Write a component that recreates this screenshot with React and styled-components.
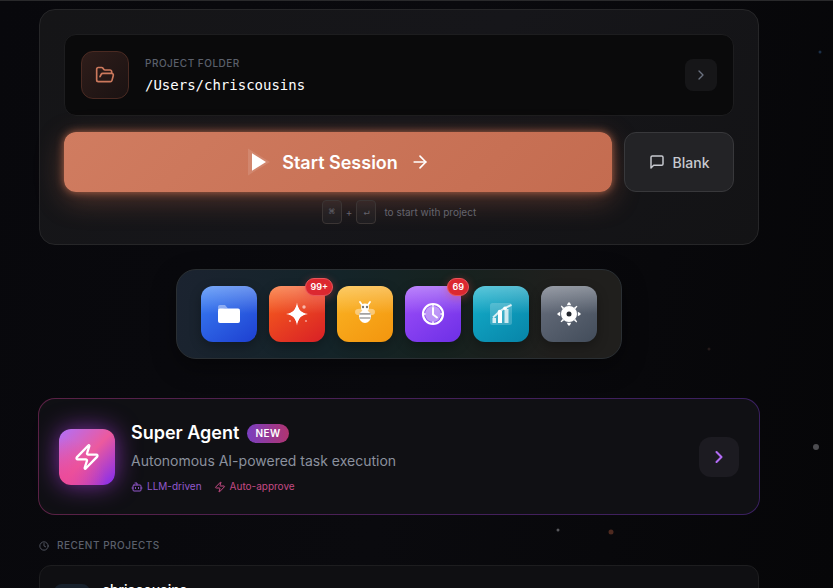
import React from 'react';
import styled, { createGlobalStyle, css } from 'styled-components';
import { ArrowRight, Bot, ChevronRight, Clock, FolderOpen, Zap } from 'lucide-react';

const stars = [
    { x: 820, y: 51, size: 3, color: '#1c3048' },
    { x: 709, y: 348, size: 3, color: '#241a1a' },
    { x: 816, y: 446, size: 6, color: '#4c4c50' },
    { x: 558, y: 529, size: 3, color: '#58585c' },
    { x: 611, y: 531, size: 5, color: '#4e2a20' },
];

const dockItems = [
    { id: 'files', label: 'Files', from: '#3b82f6', to: '#1d3fd0', Icon: FilesIcon },
    { id: 'skills', label: 'Skills', from: '#f9631c', to: '#d81f26', Icon: SparkIcon, badge: '99+' },
    { id: 'hive', label: 'Hive', from: '#fbb524', to: '#f3950e', Icon: BeeIcon },
    { id: 'history', label: 'History', from: '#a050fa', to: '#6d2fe6', Icon: TimeIcon, badge: '69' },
    { id: 'usage', label: 'Usage', from: '#14b0cc', to: '#0784a8', Icon: ChartIcon },
    { id: 'settings', label: 'Settings', from: '#6b7280', to: '#424c5a', Icon: GearIcon },
];

export default function App() {
    return (
        <Shell>
            <GlobalStyle/>
            {stars.map((star) => (
                <Star
                    key={star.x}
                    $size={star.size}
                    $color={star.color}
                    style={{ left: star.x, top: star.y }}
                />
            ))}
            <Column>
                <Launcher/>
                <Dock>
                    {dockItems.map(({ id, label, from, to, Icon, badge }) => (
                        <DockButton key={id} type="button" aria-label={label} $from={from} $to={to}>
                            <Icon/>
                            {badge && <Badge>{badge}</Badge>}
                        </DockButton>
                    ))}
                </Dock>
                <SuperAgent/>
                <RecentProjects/>
            </Column>
        </Shell>
    );
}

function Launcher() {
    return (
        <LauncherCard>
            <FolderButton type="button">
                <FolderTile>
                    <FolderOpen size={20}/>
                </FolderTile>
                <FolderText>
                    <Caption>Project Folder</Caption>
                    <Path>/Users/chriscousins</Path>
                </FolderText>
                <ArrowTile $size={32} $radius={8}>
                    <ChevronRight size={16}/>
                </ArrowTile>
            </FolderButton>
            <Actions>
                <StartButton type="button">
                    <svg width="24" height="28" viewBox="0 0 24 28" aria-hidden="true">
                        <path d="M2 0.5L24 14L2 27.5Z" fill="#fff" opacity="0.12"/>
                        <path d="M6 5.2L20 14L6 22.8Z" fill="#fff"/>
                    </svg>
                    Start Session
                    <ArrowRight size={20}/>
                </StartButton>
                <BlankButton type="button">
                    <svg width="16" height="16" viewBox="0 0 24 24" fill="none" stroke="currentColor" strokeWidth="2.2" strokeLinecap="round" strokeLinejoin="round" aria-hidden="true">
                        <path d="M21 15a2 2 0 0 1-2 2H7l-4 4V5a2 2 0 0 1 2-2h14a2 2 0 0 1 2 2z"/>
                    </svg>
                    Blank
                </BlankButton>
            </Actions>
            <Hint>
                <Keys>
                    <Key>⌘</Key>
                    <span>+</span>
                    <Key>↵</Key>
                </Keys>
                <span>to start with project</span>
            </Hint>
        </LauncherCard>
    );
}

function SuperAgent() {
    return (
        <AgentCard type="button">
            <AgentTile>
                <Zap size={28}/>
            </AgentTile>
            <AgentText>
                <AgentTitle>
                    Super Agent
                    <NewPill>NEW</NewPill>
                </AgentTitle>
                <AgentInfo>Autonomous AI-powered task execution</AgentInfo>
                <Tags>
                    <Tag $color="#9359cc"><Bot size={12}/>LLM-driven</Tag>
                    <Tag $color="#c44a84"><Zap size={12}/>Auto-approve</Tag>
                </Tags>
            </AgentText>
            <ArrowTile $size={40} $radius={12} $accent>
                <ChevronRight size={20} strokeWidth={2.5}/>
            </ArrowTile>
        </AgentCard>
    );
}

function RecentProjects() {
    return (
        <Recent>
            <RecentHeading>
                <Clock size={10}/>
                Recent Projects
            </RecentHeading>
            <ProjectRow href="#">
                <ProjectTile/>
                <ProjectName>chriscousins</ProjectName>
            </ProjectRow>
        </Recent>
    );
}

function FilesIcon() {
    return (
        <DockSvg viewBox="0 0 28 28">
            <path d="M3 10V7a2 2 0 0 1 2-2h5l3 3.5h-3z" opacity="0.4"/>
            <rect x="3" y="8.5" width="22" height="14.5" rx="2"/>
        </DockSvg>
    );
}

function SparkIcon() {
    return (
        <DockSvg viewBox="0 0 28 28">
            <path d="M14 2.5C14.9 9.5 18 13 25 14C18 15 14.9 18.5 14 25.5C13.1 18.5 10 15 3 14C10 13 13.1 9.5 14 2.5Z"/>
            <path d="M14 5L17 11L22 14L17 17L14 23L11 17L6 14L11 11Z"/>
            <circle cx="21" cy="7" r="1.7" opacity="0.6"/>
            <circle cx="7" cy="21" r="1.1" opacity="0.5"/>
            <circle cx="23" cy="21" r="1.1" opacity="0.5"/>
        </DockSvg>
    );
}

function BeeIcon() {
    return (
        <DockSvg viewBox="0 0 28 28">
            <ellipse cx="8.5" cy="12" rx="4.5" ry="3.2" opacity="0.4"/>
            <ellipse cx="19.5" cy="12" rx="4.5" ry="3.2" opacity="0.4"/>
            <path d="M11.5 5.5L9 2M16.5 5.5L19 2" stroke="#fff" strokeWidth="1.8" strokeLinecap="round"/>
            <ellipse cx="14" cy="7.5" rx="4" ry="4"/>
            <ellipse cx="14" cy="16.5" rx="6" ry="6.5"/>
            <path d="M8.5 13.8H19.5M8.5 18H19.5" stroke="#a3a3a3" strokeWidth="1.7"/>
            <circle cx="12" cy="7" r="1.2" fill="#767676"/>
            <circle cx="16" cy="7" r="1.2" fill="#767676"/>
        </DockSvg>
    );
}

function TimeIcon() {
    return (
        <DockSvg viewBox="0 0 28 28">
            <circle cx="14" cy="14" r="8" opacity="0.45"/>
            <circle cx="14" cy="14" r="10" fill="none" stroke="#fff" strokeWidth="2.2"/>
            <path d="M14 4V6.5M14 21.5V24M4 14H6.5M21.5 14H24" stroke="#fff" strokeWidth="1.5"/>
            <path d="M14 8V14.5L18 17.5" fill="none" stroke="#fff" strokeWidth="2" strokeLinecap="round" strokeLinejoin="round"/>
        </DockSvg>
    );
}

function ChartIcon() {
    return (
        <DockSvg viewBox="0 0 28 28">
            <rect x="3" y="3" width="22" height="22" rx="2.5" opacity="0.2"/>
            <rect x="5.5" y="18" width="3.5" height="5" opacity="0.8"/>
            <rect x="11" y="11" width="4" height="12"/>
            <rect x="17.5" y="9" width="4" height="14" opacity="0.75"/>
            <path d="M6 17.5L12.500 11.500L17 8.500L24.500 4.800" fill="none" stroke="#fff" strokeWidth="2" opacity="0.8"/>
            <circle cx="12.500" cy="11.300" r="1.600"/>
            <circle cx="18" cy="8.300" r="1.800"/>
        </DockSvg>
    );
}

function GearIcon() {
    return (
        <DockSvg viewBox="0 0 28 28">
            {[0, 90, 180, 270].map((angle) => (
                <path key={angle} d="M11.8 5.2L13.2 2.5H14.8L16.2 5.2Z" transform={`rotate(${angle} 14 14)`}/>
            ))}
            {[45, 135, 225, 315].map((angle) => (
                <path key={angle} d="M13 6L13.7 2.8H14.7L15 6Z" transform={`rotate(${angle} 14 14)`}/>
            ))}
            <circle cx="14" cy="14" r="8"/>
            <circle cx="14" cy="14" r="2.5" fill="#23272e"/>
        </DockSvg>
    );
}

const GlobalStyle = createGlobalStyle`
    * {
        box-sizing: border-box;
    }
    body {
        margin: 0;
        background: #08080b;
        color: #ffffff;
        font-family: Inter, "Liberation Sans", sans-serif;
    }
    button {
        margin: 0;
        color: inherit;
        font-family: inherit;
        text-align: left;
        cursor: pointer;
    }
    svg {
        flex-shrink: 0;
    }
`;

const Shell = styled.main`
    position: relative;
    height: 100vh;
    overflow: hidden;
    padding: 8px 35px 0 0;
    border-top: 1px solid #29292b;
    background: linear-gradient(100deg, #08080c 0%, #0a0a0e 50%, #060608 100%);
`;

const Star = styled.span`
    position: absolute;
    width: ${({ $size }) => $size}px;
    height: ${({ $size }) => $size}px;
    border-radius: 50%;
    background: ${({ $color }) => $color};
    transform: translate(-50%, -50%);
`;

const Column = styled.div`
    display: flex;
    flex-direction: column;
    max-width: 720px;
    margin: 0 auto;
`;

const LauncherCard = styled.section`
    display: flex;
    flex-direction: column;
    padding: 24px 24px 20px;
    border: 1px solid #262628;
    border-radius: 16px;
    background: linear-gradient(135deg, #151517, #16161a 50%, #131315);
`;

const FolderButton = styled.button`
    display: flex;
    align-items: center;
    gap: 16px;
    padding: 16px;
    border: 1px solid #1d1d1f;
    border-radius: 12px;
    background: #0a0a0b;
`;

const FolderTile = styled.span`
    display: flex;
    align-items: center;
    justify-content: center;
    width: 48px;
    height: 48px;
    border: 1px solid #4a2a22;
    border-radius: 12px;
    background: linear-gradient(135deg, #2f1d1a, #1a1212);
    color: #cc785c;
`;

const FolderText = styled.span`
    display: flex;
    flex: 1;
    flex-direction: column;
    gap: 4px;
`;

const Caption = styled.span`
    color: #5b606c;
    font-size: 10px;
    font-weight: 500;
    line-height: 16px;
    letter-spacing: 0.05em;
    text-transform: uppercase;
`;

const Path = styled.span`
    font-family: "DejaVu Sans Mono", "Liberation Mono", monospace;
    font-size: 14px;
    line-height: 20px;
`;

const ArrowTile = styled.span`
    display: flex;
    align-items: center;
    justify-content: center;
    width: ${({ $size }) => $size}px;
    height: ${({ $size }) => $size}px;
    border-radius: ${({ $radius }) => $radius}px;
    background: #161618;
    color: #6b7280;
    ${({ $accent }) => $accent && css`
        background: #1c1b21;
        color: #b26bf5;
    `}
`;

const Actions = styled.div`
    display: flex;
    gap: 12px;
    margin-top: 16px;
`;

const StartButton = styled.button`
    display: flex;
    flex: 1;
    align-items: center;
    justify-content: center;
    gap: 12px;
    height: 60px;
    padding: 0 24px;
    border: 0;
    border-radius: 12px;
    background: linear-gradient(135deg, #d07c60, #c46c50);
    box-shadow: 0 0 8px rgba(204, 112, 80, 0.8), 0 8px 28px rgba(204, 112, 80, 0.35);
    color: #ffffff;
    font-size: 18px;
    font-weight: 600;
`;

const BlankButton = styled.button`
    display: flex;
    align-items: center;
    justify-content: center;
    gap: 8px;
    width: 110px;
    padding: 0;
    border: 1px solid #38383b;
    border-radius: 12px;
    background: #232326;
    color: #c8cad0;
    font-size: 14px;
    font-weight: 500;
`;

const Hint = styled.div`
    display: flex;
    align-items: center;
    justify-content: center;
    gap: 8px;
    margin-top: 8px;
    color: #65656e;
    font-size: 10px;
    line-height: 16px;
`;

const Keys = styled.span`
    display: flex;
    align-items: center;
    gap: 4px;
`;

const Key = styled.kbd`
    display: flex;
    align-items: center;
    justify-content: center;
    width: 20px;
    height: 24px;
    border: 1px solid #3b3534;
    border-radius: 4px;
    background: rgba(255, 255, 255, 0.03);
    font-family: "DejaVu Sans Mono", monospace;
    font-size: 10px;
`;

const Dock = styled.nav`
    display: flex;
    align-self: center;
    gap: 12px;
    margin-top: 24px;
    padding: 16px 24px;
    border: 1px solid #2a2f33;
    border-radius: 20px;
    background: linear-gradient(100deg, #1b2330 0%, #142429 35%, #16221f 60%, #201f1d 85%);
    box-shadow: 0 8px 24px rgba(0, 0, 0, 0.4);
`;

const DockButton = styled.button`
    position: relative;
    display: flex;
    align-items: center;
    justify-content: center;
    width: 56px;
    height: 56px;
    padding: 0;
    border: 0;
    border-radius: 12px;
    background:
        linear-gradient(180deg, rgba(255, 255, 255, 0.3), rgba(255, 255, 255, 0) 50%),
        linear-gradient(145deg, ${({ $from }) => $from}, ${({ $to }) => $to});
    box-shadow: 0 4px 12px rgba(0, 0, 0, 0.3);
`;

const DockSvg = styled.svg.attrs({ 'aria-hidden': true })`
    width: 28px;
    height: 28px;
    fill: #ffffff;
`;

const Badge = styled.span`
    position: absolute;
    top: -8px;
    right: -8px;
    height: 18px;
    padding: 0 4px;
    border: 1px solid #e9555a;
    border-radius: 9px;
    background: #dc2830;
    box-shadow: 0 2px 8px rgba(239, 68, 68, 0.4);
    color: #ffffff;
    font-size: 9px;
    font-weight: 600;
    line-height: 16px;
`;

const AgentCard = styled.button`
    display: flex;
    align-items: center;
    gap: 16px;
    margin: 39px -1px 0;
    padding: 20px;
    border: 1px solid transparent;
    border-radius: 17px;
    background:
        linear-gradient(#101014, #101014) padding-box,
        linear-gradient(90deg, #5a2144, #47205a 50%, #3a2060) border-box;
`;

const AgentTile = styled.span`
    display: flex;
    align-items: center;
    justify-content: center;
    width: 56px;
    height: 56px;
    border-radius: 12px;
    background:
        radial-gradient(circle at 0% 100%, #ec4899 0%, rgba(236, 72, 153, 0) 60%),
        linear-gradient(135deg, #b070fa 0%, #ec5a9e 50%, #8b2fe8 95%);
    box-shadow: 0 0 24px rgba(168, 60, 220, 0.7);
`;

const AgentText = styled.span`
    display: flex;
    flex: 1;
    flex-direction: column;
`;

const AgentTitle = styled.span`
    display: flex;
    align-items: center;
    gap: 8px;
    font-size: 18px;
    font-weight: 600;
    line-height: 28px;
`;

const NewPill = styled.span`
    padding: 0 8px;
    border-radius: 10px;
    background: linear-gradient(90deg, #7a3fc0, #b03470);
    font-size: 10px;
    font-weight: 600;
    line-height: 19px;
    letter-spacing: 0.05em;
`;

const AgentInfo = styled.span`
    margin-top: 4px;
    color: #8b919e;
    font-size: 14px;
    line-height: 20px;
`;

const Tags = styled.span`
    display: flex;
    gap: 12px;
    margin-top: 8px;
`;

const Tag = styled.span`
    display: flex;
    align-items: center;
    gap: 4px;
    color: ${({ $color }) => $color};
    font-size: 10px;
    line-height: 15px;
`;

const Recent = styled.section`
    margin-top: 23px;
`;

const RecentHeading = styled.h2`
    display: flex;
    align-items: center;
    gap: 8px;
    margin: 0 0 12px;
    color: #5b606c;
    font-size: 10px;
    font-weight: 500;
    line-height: 15px;
    letter-spacing: 0.05em;
    text-transform: uppercase;
`;

const ProjectRow = styled.a`
    display: flex;
    align-items: center;
    gap: 12px;
    min-height: 74px;
    padding: 14px;
    border: 1px solid #1d1d1f;
    border-radius: 12px;
    background: #0f0f12;
    color: #ffffff;
    text-decoration: none;
`;

const ProjectTile = styled.span`
    width: 36px;
    height: 36px;
    border-radius: 8px;
    background: #17202b;
`;

const ProjectName = styled.span`
    align-self: flex-start;
    font-size: 14px;
    font-weight: 500;
    line-height: 20px;
`;
